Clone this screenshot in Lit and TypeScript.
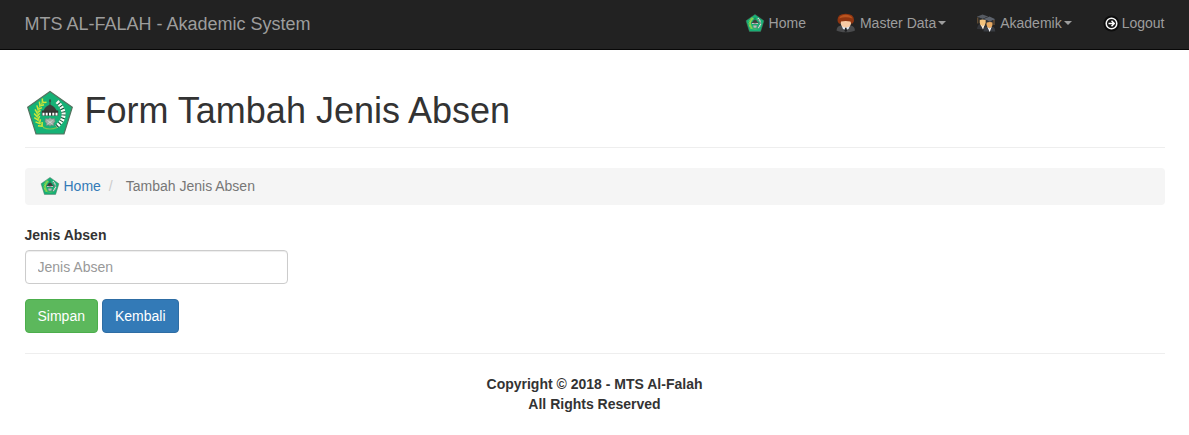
import { LitElement, html, css, svg } from "lit";
import { customElement } from "lit/decorators.js";

const grains = [
  [18, 14, 42], [15.5, 17, 34], [13.5, 20.5, 24], [12.3, 24, 12],
  [12, 27.5, -2], [12.5, 31, -14], [14, 34.5, -28], [16.5, 37.5, -42],
];

const emblem = (size: string) => html`
  <svg class=${size} viewBox="0 0 50 50" aria-hidden="true">
    <path d="M25 3.500 47.300 19.300 39 46H11L2.700 19.300Z" fill="#15b276" stroke="#55725f" stroke-width="1.200" />
    ${grains.map(([x, y, r]) => svg`
      <g transform="translate(${x} ${y}) rotate(${r})" fill="none" stroke="#cfe63a" stroke-width="1.500">
        <path d="M-2.800-2.200 0 1 2.800-2.200" />
      </g>`)}
    <path d="M18.500 13Q5.500 27 19 40" fill="none" stroke="#b5de3a" stroke-width="1" />
    <path d="M32 13.500Q45.500 27 31.500 38.500" fill="none" stroke="#1c4a37" stroke-width="3.600" />
    <path d="M32 13.500Q45.500 27 31.500 38.500" fill="none" stroke="#f6fff6" stroke-width="4" stroke-dasharray="2.100 1.100" />
    <path d="M25 11v6" stroke="#3b4b42" stroke-width="1" />
    <circle cx="25" cy="13" r="1.100" fill="#3b4b42" />
    <path d="M18.500 23Q19.500 18.500 25 16.500Q30.500 18.500 31.500 23Z" fill="#3c3f3a" />
    <path d="M16.800 22.500h16.400v5.200H16.800Z" fill="#343633" />
    <path d="M18.500 27.500v-2.800M21.700 27.500v-2.800M25 27.500v-2.800M28.300 27.500v-2.800M31.500 27.500v-2.800" stroke="#fff" stroke-width="2" />
    <path d="M20.500 30.500l3 .5 1.500-1.500 1.500 1.500 3-.5.500 3-1.500 2 .5 2-3-.5-1 1.500-1-1.500-3 .5.500-2-1.500-2Z" fill="#a3aca6" stroke="#6d8578" stroke-width=".6" />
    <path d="M22.500 32.500l5 3.500M27.500 32.500l-5 3.500" stroke="#d5dbd7" stroke-width=".8" />
    <path d="M18 39.500q7 3 14 0" fill="none" stroke="#7fc653" stroke-width="1.200" />
  </svg>`;

const userIcon = html`
  <svg class="icon" viewBox="0 0 20 20" aria-hidden="true">
    <path d="M.5 17.500Q.8 13 5 12.500h9.500q4.200.5 4.500 5-3 1.800-9.200 1.800T.5 17.500Z" fill="#4a4b4d" />
    <path d="M5.500 12.500h8.500L12.500 16l-2.700 1-2.800-1Z" fill="#dfeaf4" />
    <path d="M9.200 14.500h1.200l.8 3.500-1.400 1-1.400-1Z" fill="#1f2022" />
    <path d="M4.500 7.500h10.700V10q-.7 4.500-5.300 4.500T4.500 10Z" fill="#f7cba5" />
    <path d="M1.500 7Q1.500.8 9.700.8T18 7q0 2.500-1.500 3.500-1 .5-1.500-.5l-.6-1.500Q9.700 7.500 5 8.500L4.500 10q-.5 1-1.500.5Q1.500 9.500 1.500 7Z" fill="#8f3510" />
    <path d="M3 5.500Q4.500 1.800 9.700 1.800t6.800 3.700Q9.700 3 3 5.500Z" fill="#b9541f" />
  </svg>`;

const graduatesIcon = html`
  <svg class="icon" viewBox="0 0 20 20" aria-hidden="true">
    <path d="M1 16Q1.500 12 4 11l5.500.5 1 5Z" fill="#33353a" />
    <path d="M3.700 6h6v3.500q-.5 3.500-3 4-2.700-.7-3-4Z" fill="#f3c27c" />
    <path d="M4.500 11.500l2.200 1.700 2-1.700-1.700 5Z" fill="#fff0dd" />
    <path d="M.8 3.800 6.500 1.500l5.700 2L6.800 6Z" fill="#565b63" />
    <path d="M3.200 4.500v2.800q3-1.300 6.800-.2V4.500L6.700 6Z" fill="#292c31" />
    <path d="M1.800 4.500v6" stroke="#8d6b40" stroke-width=".8" />
    <path d="M7.500 18.500q.2-4 2.800-5l7 .3q2 1.500 2 4.700Z" fill="#393c42" />
    <path d="M10.500 8.500h6V12q-.5 3-3 3.700-2.500-.7-3-3.700Z" fill="#e8aa63" />
    <path d="M11.300 13.700l2.200 1.800 2.200-1.800-2 5.300Z" fill="#fff" />
    <path d="M7.700 6 13.500 3.500l5.800 2.700-5.500 2.500Z" fill="#5d636d" />
    <path d="M10 7v2.800q3.500-1.300 7-.3V7l-3.200 1.700Z" fill="#2c3036" />
    <path d="M18 7v5" stroke="#a27544" stroke-width=".8" />
  </svg>`;

const logoutIcon = html`
  <svg class="icon" viewBox="0 0 20 20" aria-hidden="true">
    <circle cx="9.500" cy="10.500" r="8" fill="#0d0d0d" />
    <circle cx="9.500" cy="10.500" r="5.300" fill="#151515" stroke="#f5f5f5" stroke-width="1.500" />
    <path d="M6.500 10.500h5M9.500 7.800l2.700 2.700-2.700 2.700" fill="none" stroke="#fff" stroke-width="1.500" />
  </svg>`;

@customElement("app-root")
export class AppRoot extends LitElement {
  static styles = css`
    :host {
      display: block;
      font: 14px/20px "Liberation Sans", Arial, sans-serif;
      color: #333;
      background: #fff;
    }
    * { box-sizing: border-box; }
    a { color: #337ab7; text-decoration: none; }
    .container { max-width: 1170px; margin: 0 auto; padding: 0 15px; }
    .navbar { background: #222; border-bottom: 1px solid #080808; }
    .bar { display: flex; flex-wrap: wrap; justify-content: space-between; }
    .brand { padding: 14px 0 15px; font-size: 18px; color: #9d9d9d; }
    .menu { display: flex; flex-wrap: wrap; gap: 30px; list-style: none; margin: 0; padding: 0; }
    .link {
      display: flex; align-items: center; gap: 4px;
      padding: 13px 0 16px; color: #9d9d9d;
    }
    .link.tight { gap: 0; }
    .icon { width: 20px; height: 20px; flex: none; }
    .caret {
      margin-left: -2px;
      border-top: 4px solid;
      border-left: 4px solid transparent;
      border-right: 4px solid transparent;
    }
    .header {
      display: flex; align-items: center; gap: 10px;
      margin: 38px 0 20px; padding-bottom: 9px;
      border-bottom: 1px solid #eee;
    }
    .logo { width: 50px; height: 50px; flex: none; }
    .title { margin: 0 0 4px; font-size: 36px; line-height: 40px; font-weight: 500; }
    .crumbs {
      display: flex; align-items: center;
      list-style: none; margin: 0 0 20px; padding: 8px 15px 9px;
      background: #f5f5f5; border-radius: 4px; color: #777;
    }
    .crumb { display: flex; gap: 4px; }
    .crumb + .crumb::before { content: "/"; color: #ccc; padding: 0 9px 0 8px; }
    .label { display: block; margin-bottom: 5px; font-weight: 700; }
    .field {
      display: block; width: 263px; max-width: 100%; height: 34px; margin-bottom: 15px;
      padding: 6px 12px; border: 1px solid #ccc; border-radius: 4px;
      font: inherit; color: #555; background: #fff;
      box-shadow: inset 0 1px 1px rgba(0, 0, 0, 0.075);
    }
    .field::placeholder { color: #999; opacity: 1; }
    .actions { display: flex; gap: 4px; }
    .btn {
      padding: 6px 12px; border: 1px solid; border-radius: 4px;
      font: inherit; color: #fff; cursor: pointer;
    }
    .save { background: #5cb85c; border-color: #4cae4c; }
    .back { background: #337ab7; border-color: #2e6da4; }
    .footer {
      margin-top: 20px; padding: 20px 0; border-top: 1px solid #eee;
      text-align: center; font-weight: 700;
    }
    .note { margin: 0; }
  `;

  render() {
    return html`
      <nav class="navbar">
        <div class="container bar">
          <a class="brand" href="#">MTS AL-FALAH - Akademic System</a>
          <ul class="menu">
            <li><a class="link" href="#">${emblem("icon")}<span>Home</span></a></li>
            <li><a class="link" href="#">${userIcon}<span>Master Data</span><span class="caret"></span></a></li>
            <li><a class="link" href="#">${graduatesIcon}<span>Akademik</span><span class="caret"></span></a></li>
            <li><a class="link tight" href="#">${logoutIcon}<span>Logout</span></a></li>
          </ul>
        </div>
      </nav>
      <main class="container">
        <header class="header">
          ${emblem("logo")}
          <h1 class="title">Form Tambah Jenis Absen</h1>
        </header>
        <ol class="crumbs">
          <li class="crumb">${emblem("icon")}<a href="#">Home</a></li>
          <li class="crumb"><span>Tambah Jenis Absen</span></li>
        </ol>
        <form @submit=${(e: Event) => e.preventDefault()}>
          <label class="label" for="jenis">Jenis Absen</label>
          <input class="field" id="jenis" type="text" placeholder="Jenis Absen" />
          <div class="actions">
            <button class="btn save" type="submit">Simpan</button>
            <button class="btn back" type="button">Kembali</button>
          </div>
        </form>
        <footer class="footer">
          <p class="note">Copyright © 2018 - MTS Al-Falah</p>
          <p class="note">All Rights Reserved</p>
        </footer>
      </main>
    `;
  }
}
